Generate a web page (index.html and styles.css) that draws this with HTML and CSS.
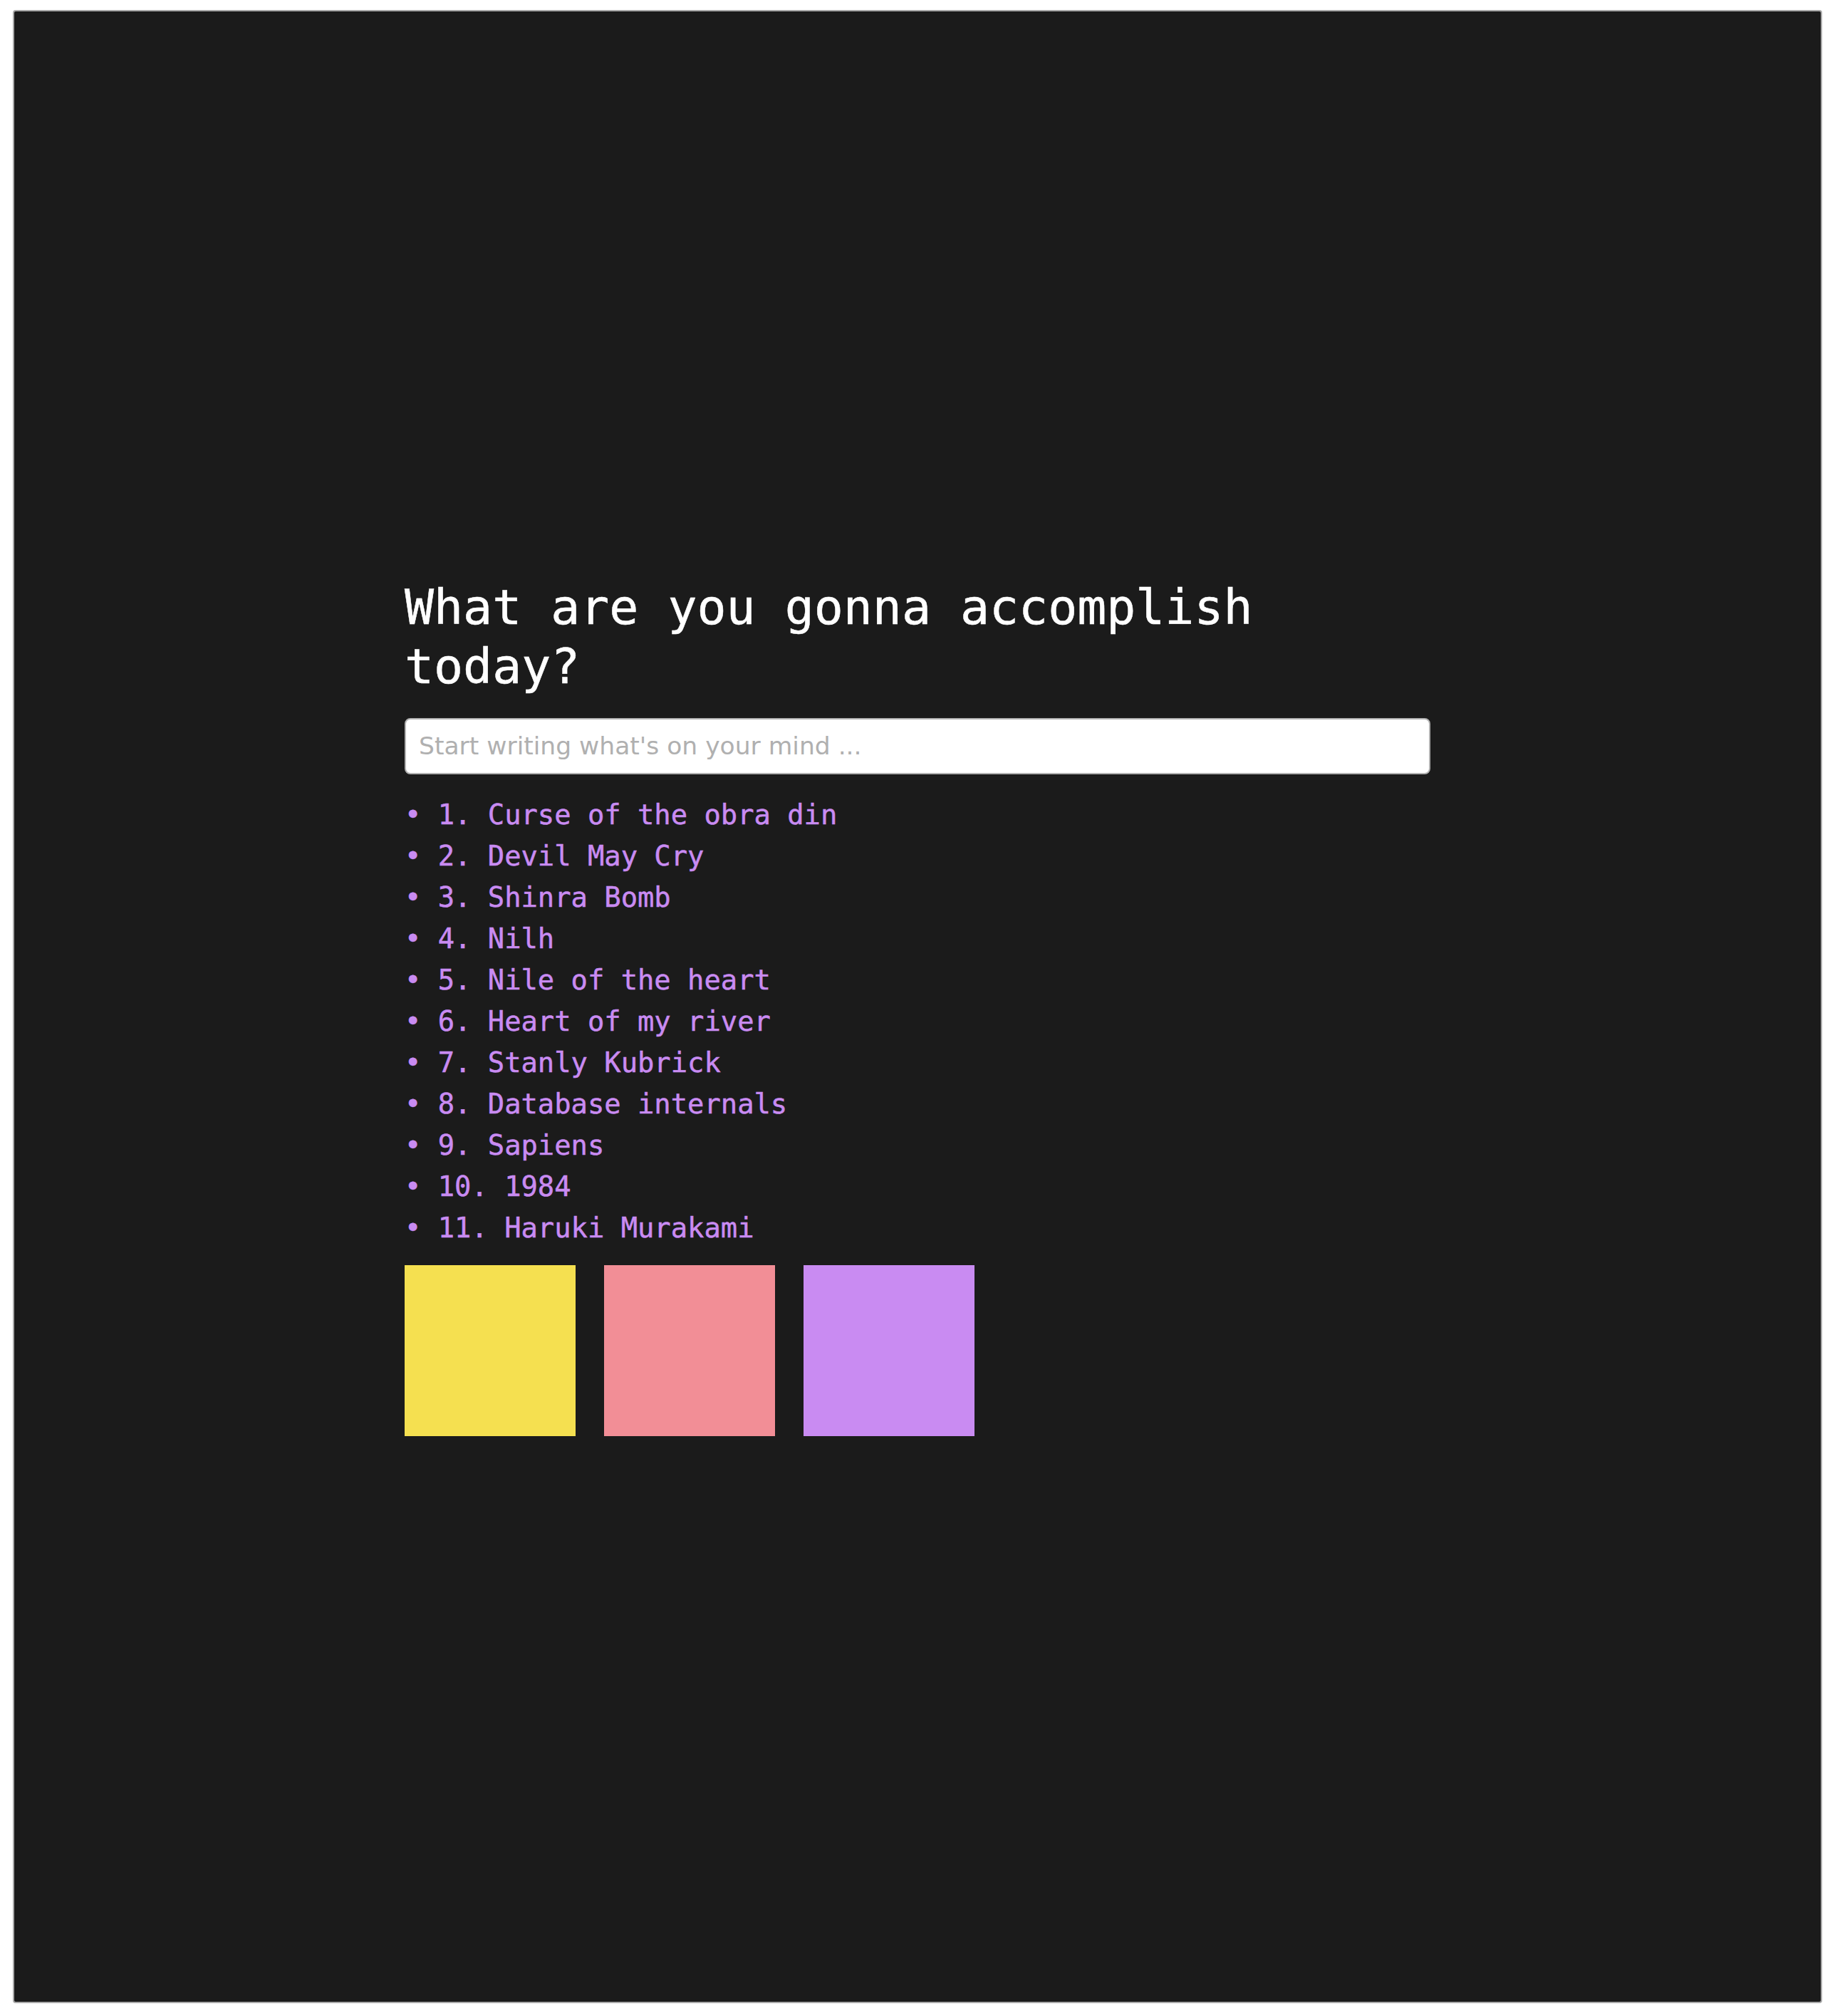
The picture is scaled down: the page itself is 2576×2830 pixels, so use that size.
FILE: index.html
```html
<!DOCTYPE html>
<html lang="en">
<head>
<meta charset="utf-8">
<title>Todo</title>
<link rel="stylesheet" href="styles.css">
</head>
<body>
  <div class="frame">
    <main class="content">
      <h1 class="title">What are you gonna accomplish today?</h1>
      <input class="entry" type="text" placeholder="Start writing what's on your mind ...">
      <ul class="tasks">
        <li>1. Curse of the obra din</li>
        <li>2. Devil May Cry</li>
        <li>3. Shinra Bomb</li>
        <li>4. Nilh</li>
        <li>5. Nile of the heart</li>
        <li>6. Heart of my river</li>
        <li>7. Stanly Kubrick</li>
        <li>8. Database internals</li>
        <li>9. Sapiens</li>
        <li>10. 1984</li>
        <li>11. Haruki Murakami</li>
      </ul>
      <div class="swatches">
        <div class="swatch swatch-yellow"></div>
        <div class="swatch swatch-pink"></div>
        <div class="swatch swatch-purple"></div>
      </div>
    </main>
  </div>
</body>
</html>
```
FILE: styles.css
```css
html, body {
  margin: 0;
  padding: 0;
  background: #ffffff;
}

body {
  padding: 14px 18px 18px 18px;
}

.frame {
  box-sizing: border-box;
  height: 2798px;
  border: 2px solid #a9a9a9;
  border-radius: 4px;
  background: #1b1b1b;
  display: flex;
  justify-content: center;
  align-items: center;
}

.content {
  width: 1440px;
  display: flex;
  flex-direction: column;
}

.title {
  margin: 0 0 31px 0;
  font-family: "DejaVu Sans Mono", monospace;
  font-weight: normal;
  font-size: 68.2px;
  line-height: 83px;
  color: #ffffff;
  -webkit-text-stroke: 0.5px #ffffff;
}

.entry {
  box-sizing: border-box;
  width: 100%;
  height: 79px;
  margin: 0;
  padding: 0 18px;
  border: 2px solid #b3b3b3;
  border-radius: 8px;
  background: #ffffff;
  font-family: "DejaVu Sans", sans-serif;
  font-size: 34.5px;
  color: #222;
  outline: none;
}

.entry::placeholder {
  color: #b0b0b0;
}

.tasks {
  margin: 28px 0 23px 0;
  padding: 0;
  list-style: "• " inside;
  font-family: "DejaVu Sans Mono", monospace;
  font-size: 38.8px;
  line-height: 58px;
  color: #c98bf2;
  -webkit-text-stroke: 0.5px #c98bf2;
}

.swatches {
  display: flex;
  gap: 40px;
}

.swatch {
  width: 240px;
  height: 240px;
}

.swatch-yellow { background: #f5e050; }
.swatch-pink { background: #f28e96; }
.swatch-purple { background: #c98bf2; }
```
